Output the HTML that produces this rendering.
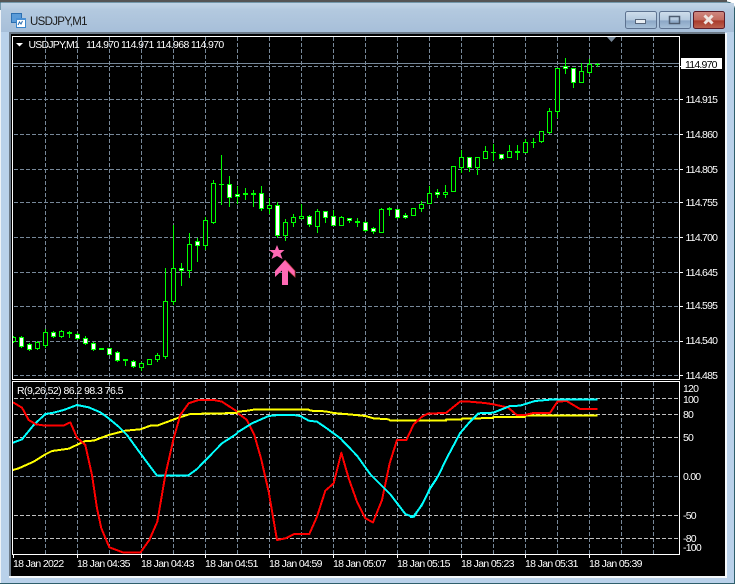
<!DOCTYPE html>
<html><head><meta charset="utf-8"><title>USDJPY,M1</title>
<style>
html,body{margin:0;padding:0;background:#fff;width:737px;height:585px;overflow:hidden}
svg{display:block}
text{font-family:"Liberation Sans",sans-serif;font-size:10.5px;fill:#fff;letter-spacing:-.78px}
</style></head><body>
<svg width="737" height="585" viewBox="0 0 737 585" xmlns="http://www.w3.org/2000/svg">
<defs>
<linearGradient id="tb" x1="0" y1="0" x2="0" y2="1"><stop offset="0" stop-color="#c2d5e7"/><stop offset=".25" stop-color="#b3c9df"/><stop offset="1" stop-color="#a7bfd9"/></linearGradient>
<linearGradient id="bt" x1="0" y1="0" x2="0" y2="1"><stop offset="0" stop-color="#cfdeec"/><stop offset=".5" stop-color="#b4c9de"/><stop offset=".55" stop-color="#8ba7c6"/><stop offset="1" stop-color="#a9c2da"/></linearGradient>
<linearGradient id="cl" x1="0" y1="0" x2="0" y2="1"><stop offset="0" stop-color="#d08a82"/><stop offset=".5" stop-color="#c26a5e"/><stop offset=".55" stop-color="#a93a2a"/><stop offset="1" stop-color="#bc6452"/></linearGradient>
<clipPath id="m"><rect x="13" y="37" width="666" height="342"/></clipPath>
<clipPath id="i"><rect x="13" y="382" width="666" height="172"/></clipPath>
</defs>
<rect width="737" height="585" fill="#fff"/>
<path d="M0 2H727Q734 3 734.500 9V583.500H0Z" fill="#b9d1ea" stroke="#2f5f6c" stroke-width="1"/>
<rect x="0" y="0" width="727" height="2" fill="#555"/>
<rect x="1" y="3" width="733" height="29" fill="url(#tb)"/>
<rect x="0" y="10" width="1" height="573" fill="#eef3f8"/>
<rect x="1" y="583" width="733" height="1" fill="#2f5f6c"/>
<rect x="734" y="8" width="1" height="576" fill="#2f5f6c"/>
<!-- icon -->
<rect x="11.500" y="13.500" width="10" height="9" fill="#5a9bd8" stroke="#2c6fb0" stroke-width="1"/>
<rect x="16.500" y="18.500" width="9" height="9" fill="#fff" stroke="#3a86cc" stroke-width="1"/>
<rect x="16" y="18" width="10" height="2" fill="#4a90d4"/>
<path d="M18 25l1.500-3 1.500 2 1.500-3" fill="none" stroke="#2c6fb0"/>
<text x="30" y="25" style="font-size:11.5px;fill:#1a1a1a;letter-spacing:-.69px">USDJPY,M1</text>
<!-- buttons -->
<rect x="625.500" y="11.500" width="31" height="17" rx="2" fill="url(#bt)" stroke="#5d7290"/>
<rect x="635.500" y="19.500" width="10" height="4" fill="#e8eef4" stroke="#56657a"/>
<rect x="659.500" y="11.500" width="31" height="17" rx="2" fill="url(#bt)" stroke="#5d7290"/>
<rect x="669.500" y="16.500" width="10" height="7" fill="none" stroke="#4d5c70" stroke-width="1.500"/>
<rect x="693.500" y="11.500" width="31" height="17" rx="2" fill="url(#cl)" stroke="#5c1c28"/>
<path d="M704.500 15.500l8 8M712.500 15.500l-8 8" stroke="#efe6e2" stroke-width="3" fill="none"/>
<!-- client -->
<rect x="9" y="32" width="2" height="544" fill="#6c7a88"/>
<rect x="9" y="32" width="716" height="2" fill="#6c7a88"/>
<rect x="11" y="34" width="714" height="542" fill="#000"/>
<rect x="725" y="33" width="2" height="545" fill="#f4f8fb"/>
<rect x="9" y="576" width="718" height="2" fill="#f4f8fb"/>
<!-- grids -->
<g fill="none" stroke="#778899" stroke-width="1" stroke-dasharray="4 2" shape-rendering="crispEdges">
<path d="M14 66.500H679M14 99.500H679M14 134.500H679M14 169.500H679M14 202.500H679M14 237.500H679M14 272.500H679M14 306.500H679M14 341.500H679M14 375.500H679"/>
<path d="M45.500 37V379M77.500 37V379M109.500 37V379M141.500 37V379M173.500 37V379M205.500 37V379M237.500 37V379M269.500 37V379M301.500 37V379M333.500 37V379M365.500 37V379M397.500 37V379M429.500 37V379M461.500 37V379M493.500 37V379M525.500 37V379M557.500 37V379M589.500 37V379M621.500 37V379M653.500 37V379"/>
<path d="M45.500 382V554M77.500 382V554M109.500 382V554M141.500 382V554M173.500 382V554M205.500 382V554M237.500 382V554M269.500 382V554M301.500 382V554M333.500 382V554M365.500 382V554M397.500 382V554M429.500 382V554M461.500 382V554M493.500 382V554M525.500 382V554M557.500 382V554M589.500 382V554M621.500 382V554M653.500 382V554"/>
<path d="M14 476.500H679"/>
<path stroke="#c0c0c0" d="M14 398.500H679M14 414.500H679M14 437.500H679M14 515.500H679M14 538.500H679"/>
</g>
<!-- bid line -->
<rect x="13" y="63" width="666" height="1" fill="#778899"/>
<!-- candles -->
<g clip-path="url(#m)" shape-rendering="crispEdges" stroke="#00ff00" stroke-width="1">
<path fill="none" d="M13.500 336V343M21.500 336V348M29.500 343V351M37.500 341V350M45.500 329V348M53.500 331V338M61.500 330V338M69.500 331V338M77.500 333V340M85.500 336V345M93.500 342V351M117.500 351V362M125.500 359V366M133.500 360V368M141.500 362V371M157.500 353V362M165.500 268V359M173.500 225V305M181.500 263V286M189.500 233V278M197.500 238V262M205.500 217V250M213.500 180V224M221.500 155V205M229.500 176V207M237.500 186V204M245.500 188V200M253.500 190V207M261.500 186V211M269.500 198V214M277.500 202V238M285.500 219V241M293.500 214V227M301.500 204V219M309.500 215V227M317.500 209V233M325.500 211V223M333.500 210V226M341.500 216V226M349.500 218V223M357.500 218V227M365.500 221V232M373.500 227V234M381.500 208V233M389.500 207V216M397.500 209V219M405.500 213V219M413.500 208V216M421.500 201V212M429.500 186V204M437.500 189V198M445.500 185V198M453.500 166V192M461.500 150V173M469.500 157V172M477.500 157V175M485.500 146V159M493.500 144V161M501.500 154V160M509.500 145V158M517.500 145V160M525.500 139V153M533.500 138V148M541.500 131V143M549.500 108V134M557.500 68V118M565.500 58V74M573.500 68V88M581.500 63V83M589.500 59V74M597.500 63V67"/>
<path fill="#000" d="M11.500 337.500h4V341.500h-4zM35.500 342.500h4V348.500h-4zM43.500 332.500h4V345.500h-4zM59.500 331.500h4V336.500h-4zM139.500 363.500h4V367.500h-4zM147.500 359.500h4V364.500h-4zM155.500 355.500h4V359.500h-4zM163.500 301.500h4V356.500h-4zM171.500 268.500h4V301.500h-4zM187.500 244.500h4V270.500h-4zM203.500 220.500h4V245.500h-4zM211.500 183.500h4V222.500h-4zM267.500 205.500h4V208.500h-4zM283.500 222.500h4V235.500h-4zM291.500 217.500h4V222.500h-4zM299.500 216.500h4V218.500h-4zM315.500 211.500h4V226.500h-4zM339.500 217.500h4V225.500h-4zM379.500 209.500h4V232.500h-4zM411.500 208.500h4V215.500h-4zM419.500 204.500h4V208.500h-4zM427.500 193.500h4V203.500h-4zM443.500 192.500h4V194.500h-4zM451.500 166.500h4V191.500h-4zM459.500 157.500h4V167.500h-4zM475.500 157.500h4V167.500h-4zM483.500 151.500h4V158.500h-4zM507.500 151.500h4V157.500h-4zM523.500 142.500h4V152.500h-4zM539.500 131.500h4V141.500h-4zM547.500 111.500h4V132.500h-4zM555.500 68.500h4V111.500h-4zM579.500 71.500h4V82.500h-4zM587.500 64.500h4V72.500h-4z"/>
<path fill="#fff" d="M19.500 337.500h4V346.500h-4zM27.500 344.500h4V349.500h-4zM51.500 332.500h4V336.500h-4zM67.500 332.500h4V333.500h-4zM75.500 334.500h4V338.500h-4zM83.500 338.500h4V343.500h-4zM91.500 343.500h4V349.500h-4zM99.500 348.500h4V349.500h-4zM107.500 348.500h4V354.500h-4zM115.500 352.500h4V360.500h-4zM123.500 359.500h4V360.500h-4zM131.500 361.500h4V366.500h-4zM179.500 268.500h4V270.500h-4zM195.500 241.500h4V245.500h-4zM227.500 184.500h4V197.500h-4zM235.500 194.500h4V196.500h-4zM243.500 193.500h4V194.500h-4zM251.500 193.500h4V194.500h-4zM259.500 193.500h4V208.500h-4zM275.500 205.500h4V235.500h-4zM307.500 216.500h4V224.500h-4zM323.500 211.500h4V217.500h-4zM331.500 216.500h4V225.500h-4zM347.500 218.500h4V220.500h-4zM355.500 221.500h4V222.500h-4zM363.500 222.500h4V230.500h-4zM371.500 228.500h4V231.500h-4zM387.500 208.500h4V209.500h-4zM395.500 209.500h4V217.500h-4zM403.500 215.500h4V217.500h-4zM435.500 192.500h4V194.500h-4zM467.500 157.500h4V167.500h-4zM499.500 154.500h4V158.500h-4zM515.500 151.500h4V152.500h-4zM563.500 66.500h4V68.500h-4zM571.500 68.500h4V82.500h-4z"/>
<path fill="none" d="M219 184.500h5M491 152.500h5M531 142.500h5M595 64.500h5"/>
</g>
<!-- star and arrow -->
<polygon points="277,245 279,250 284.500,250 280.500,253.500 282.500,259 277,256 271.500,259 273.500,253.500 269,250 275,250" fill="#ff69b4"/>
<polygon points="285,260 295,271 295,277 288,270.500 288,285 282,285 282,270.500 275,277 275,271" fill="#ff69b4"/>
<path d="M285 260l10 11v6l-7-6.500" fill="none" stroke="#c8404a" stroke-width=".8"/>
<!-- RSI lines -->
<g clip-path="url(#i)" fill="none" shape-rendering="crispEdges" stroke-linejoin="round">
<g stroke-width="6" transform="translate(12 385) scale(.33333)">
<polyline stroke="#ffff00" points="3,255 20,250 65,230 100,208 120,198 170,191 220,168 245,167 290,150 340,137 385,133 415,122 435,122 500,98 535,87 676,84"/>
<polyline stroke="#00ffff" points="3,173 30,163 65,120 100,87 125,83 155,75 195,60 230,67 265,82 290,100 320,125 345,150 385,205 435,272 528,272 555,252 630,175 676,145"/>
<polyline stroke="#ff0000" points="3,52 30,68 50,105 72,118 100,122 155,122 175,112 195,158 220,180 240,270 255,370 268,430 292,487 335,503 385,503 412,465 436,410 460,270 485,160 505,90 530,55 560,45 605,45 630,50 676,80"/>
</g>
<g stroke-width="6" transform="translate(237 385) scale(.33333)">
<polyline stroke="#ffff00" points="0,80 25,78 50,74 215,74 220,77 265,79 290,84 335,88 385,93 410,100 455,103 460,107 600,107"/>
<polyline stroke="#ff0000" points="3,85 30,105 52,150 72,220 95,320 120,465 145,460 172,447 217,447 240,395 265,317 290,295 313,203 335,280 360,350 385,400 408,412 435,345 458,235 480,165 508,165 530,118 555,95 575,85 600,85"/>
<polyline stroke="#00ffff" points="0,143 45,115 95,93 125,90 170,90 190,93 215,107 240,110 265,127 310,160 360,212 400,268 460,328 505,387 528,396 555,360 580,310 600,280"/>
</g>
<g stroke-width="6" transform="translate(410 385) scale(.33333)">
<polyline stroke="#ffff00" points="81,107 108,107 108,104 155,104 155,101 250,99 250,96 345,96 345,92 563,92"/>
<polyline stroke="#ff0000" points="81,84 108,84 150,50 178,50 225,54 250,58 295,68 320,90 345,90 370,84 420,84 442,50 470,48 510,72 563,72"/>
<polyline stroke="#00ffff" points="0,396 12,395 40,352 60,310 85,272 110,220 150,145 180,110 205,85 250,83 300,63 330,62 375,48 420,44 563,44"/>
</g>
</g>
<!-- panel borders and ticks -->
<g fill="none" stroke="#fff" stroke-width="1" shape-rendering="crispEdges">
<rect x="12.500" y="36.500" width="667" height="343"/>
<rect x="12.500" y="381.500" width="667" height="173"/>
<path d="M680 66.500h3M680 99.500h3M680 134.500h3M680 169.500h3M680 202.500h3M680 237.500h3M680 272.500h3M680 306.500h3M680 341.500h3M680 375.500h3"/>
<path d="M13.500 555v3M77.500 555v3M141.500 555v3M205.500 555v3M269.500 555v3M333.500 555v3M397.500 555v3M461.500 555v3M525.500 555v3M589.500 555v3"/>
</g>
<polygon points="607,37 616,37 611.500,42" fill="#778899"/>
<polygon points="16,43 23,43 19.500,46.500" fill="#fff"/>
<!-- labels -->
<text x="28.500" y="48" style="letter-spacing:-.79px">USDJPY,M1</text>
<text x="86" y="48" style="letter-spacing:-.64px">114.970 114.971 114.968 114.970</text>
<rect x="681" y="58" width="41" height="11" fill="#fff"/>
<text x="685" y="68" style="fill:#000">114.970</text>
<text x="685.500" y="103">114.915</text>
<text x="685.500" y="138">114.860</text>
<text x="685.500" y="173">114.805</text>
<text x="685.500" y="206">114.755</text>
<text x="685.500" y="241">114.700</text>
<text x="685.500" y="276">114.645</text>
<text x="685.500" y="309">114.595</text>
<text x="685.500" y="344">114.540</text>
<text x="685.500" y="379">114.485</text>
<text x="17" y="394" style="letter-spacing:-.55px">R(9,26,52) 86.2 98.3 76.5</text>
<text x="683" y="392">120</text>
<text x="683" y="403">100</text>
<text x="683" y="418">80</text>
<text x="683" y="441">50</text>
<text x="683" y="480">0.00</text>
<text x="683" y="519">-50</text>
<text x="683" y="542">-80</text>
<text x="683" y="551">-100</text>
<text x="13" y="567" style="letter-spacing:-.66px">18 Jan 2022</text>
<text x="77" y="567" style="letter-spacing:-.66px">18 Jan 04:35</text>
<text x="141" y="567" style="letter-spacing:-.66px">18 Jan 04:43</text>
<text x="205" y="567" style="letter-spacing:-.66px">18 Jan 04:51</text>
<text x="269" y="567" style="letter-spacing:-.66px">18 Jan 04:59</text>
<text x="333" y="567" style="letter-spacing:-.66px">18 Jan 05:07</text>
<text x="397" y="567" style="letter-spacing:-.66px">18 Jan 05:15</text>
<text x="461" y="567" style="letter-spacing:-.66px">18 Jan 05:23</text>
<text x="525" y="567" style="letter-spacing:-.66px">18 Jan 05:31</text>
<text x="589" y="567" style="letter-spacing:-.66px">18 Jan 05:39</text>
</svg>
</body></html>
